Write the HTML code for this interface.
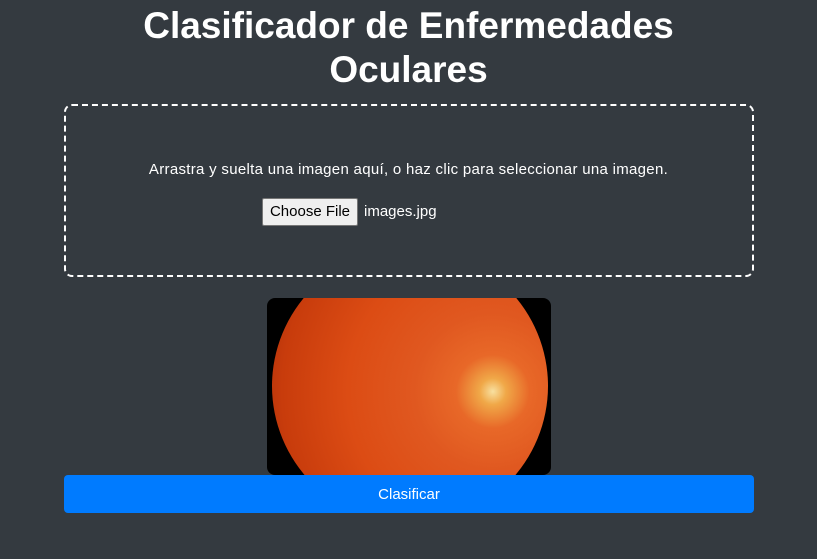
<!DOCTYPE html>
<html><head><style>
html,body{margin:0;width:817px;height:559px;background:#343a40;overflow:hidden;font-family:"Liberation Sans",sans-serif;color:#fff}
h1{position:absolute;left:0;width:817px;top:4px;margin:0;text-align:center;font-size:37px;line-height:44px;font-weight:bold}
.drop{position:absolute;left:64px;top:104px;width:686px;height:169px;border:2px dashed #fff;border-radius:8px}
.t{position:absolute;left:0;width:817px;top:161px;text-align:center;font-size:15px;letter-spacing:0.3px}
.btnf{position:absolute;left:262px;top:198px;width:94px;height:26px;background:#efefef;border:1px solid #767676;border-radius:2px;color:#000;font-size:15px;line-height:26px;text-align:center}
.fn{position:absolute;left:364px;top:203px;font-size:15px}
.img{position:absolute;left:267px;top:298px;width:284px;height:177px;background:#000;border-radius:8px;overflow:hidden}
.c{position:absolute;left:5px;top:-50px;width:276px;height:276px;border-radius:50%;background:radial-gradient(circle at 80% 52%,#f8e0a0 0,#f0a848 5%,#e86828 14%,#e05820 30%,#dc4c14 55%,#c83c0c 80%,#a02806 100%)}
.cls{position:absolute;left:64px;top:475px;width:690px;height:38px;background:#007bff;border-radius:4px;text-align:center;line-height:40px;font-size:15px}
</style></head><body>
<h1>Clasificador de Enfermedades<br>Oculares</h1>
<div class="drop"></div>
<div class="t">Arrastra y suelta una imagen aquí, o haz clic para seleccionar una imagen.</div>
<div class="btnf">Choose File</div><div class="fn">images.jpg</div>
<div class="img"><div class="c"></div></div>
<div class="cls">Clasificar</div>
</body></html>
